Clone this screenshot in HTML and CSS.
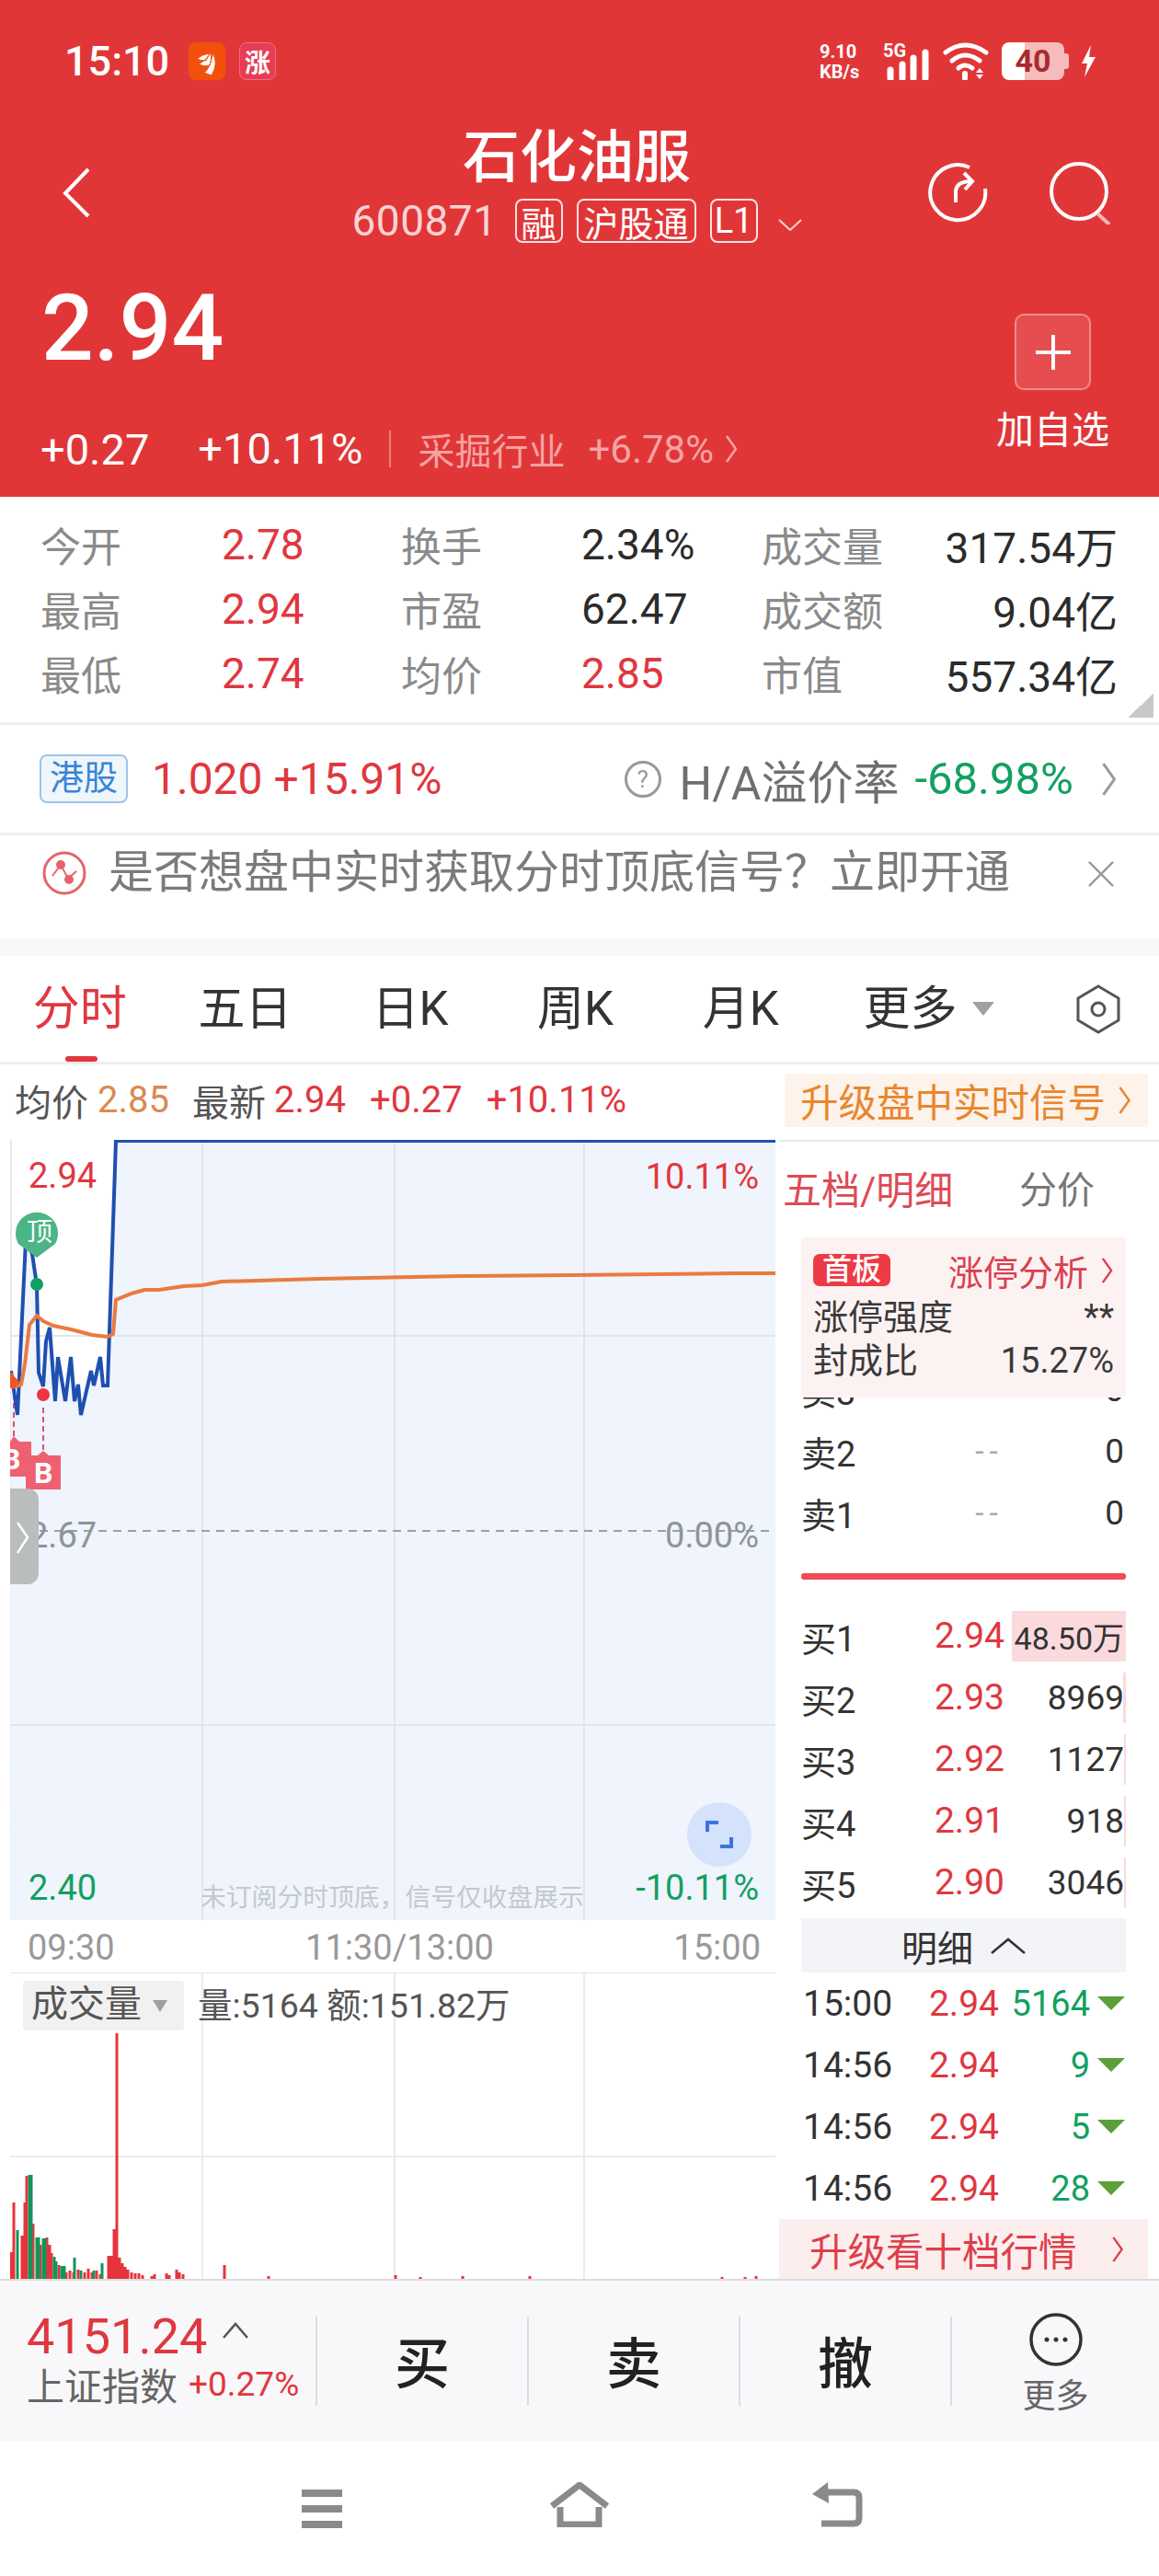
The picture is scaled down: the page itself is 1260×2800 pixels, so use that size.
FILE: index.html
```html
<!DOCTYPE html>
<html lang="zh-CN">
<head>
    <meta charset="UTF-8">
    <meta name="viewport" content="width=device-width, initial-scale=1.0">
    <title>石化油服 600871</title>
    <link rel="stylesheet" href="styles.css">
</head>
<body>
<div class="page">

    <!-- 红色头部 -->
    <header class="head">
        <div class="status">
            <div class="status-left">
                <span class="clock">15:10</span>
                <span class="app app-orange">
                    <svg viewBox="0 0 40 41"><path d="M9 18 Q15 13 23 12 L19 20 Q13 20 9 18Z M11 24 Q18 20 24 12 Q26 18 23 25 Q18 27 11 24Z M17 33 Q24 28 26 12 Q33 22 25 36Z" fill="#fff" stroke="#f2500c" stroke-width="1"/></svg>
                </span>
                <span class="app app-pink">涨</span>
            </div>
            <div class="status-right">
                <div class="net"><span>9.10</span><span>KB/s</span></div>
                <div class="signal">
                    <span class="five-g">5G</span>
                    <svg viewBox="0 0 51 41"><path d="M8 30V39M21 24V39M33 17V39M46 11V39" stroke="#fff" stroke-width="7" stroke-linecap="round" fill="none"/></svg>
                </div>
                <svg class="wifi" viewBox="0 0 51 41" fill="none" stroke="#fff" stroke-linecap="round"><path d="M3 11 Q24 -5 47 11" stroke-width="5"/><path d="M10 20 Q24 8 40 20" stroke-width="5"/><path d="M17 28 Q24 22 32 28" stroke-width="5"/><path d="M24 34V39" stroke-width="6"/><path d="M40 28 L44 33 H36Z M40 40 L44 35 H36Z" fill="#fff" stroke="none"/></svg>
                <div class="battery"><span>40</span></div>
                <svg class="bolt" viewBox="0 0 17 35"><path d="M11 0 L1 20 H7 L4 35 L16 13 H9Z" fill="#fff"/></svg>
            </div>
        </div>

        <div class="titlebar">
            <svg class="back" viewBox="0 0 30 55"><path d="M28 2 L3 28 L28 53"/></svg>
            <div class="title-mid">
                <h1>石化油服</h1>
                <div class="code-row">
                    <span class="code">600871</span>
                    <span class="tag tag-one">融</span>
                    <span class="tag">沪股通</span>
                    <span class="tag tag-one">L1</span>
                    <svg class="code-arrow" viewBox="0 0 26 13"><path d="M1 1 L13 12 L25 1"/></svg>
                </div>
            </div>
            <div class="title-icons">
                <svg class="icon-share" viewBox="0 0 66 68"><path d="M45 6 A30 30 0 1 0 62 29"/><path d="M30 44 V33 Q30 21 47 21"/><path d="M39 12 L48 21 L40 30"/></svg>
                <svg class="icon-search" viewBox="0 0 68 68"><circle cx="33" cy="32" r="30"/><path d="M53 56 L66 68" stroke="#f5b5b5"/></svg>
            </div>
        </div>

        <div class="quote">
            <div class="quote-left">
                <div class="price">2.94</div>
                <div class="change">
                    <span>+0.27</span>
                    <span class="pct">+10.11%</span>
                    <span class="sector">采掘行业</span>
                    <span class="sector-pct">+6.78%</span>
                    <svg class="chev chev-sector" viewBox="0 0 12 30"><path d="M1 1 L11 15 L1 29"/></svg>
                </div>
            </div>
            <div class="quote-right">
                <div class="add-btn">
                    <svg viewBox="0 0 40 40"><path d="M20 1V39M1 20H39" stroke="#fff" stroke-width="4" fill="none"/></svg>
                </div>
                <div class="add-label">加自选</div>
            </div>
        </div>
    </header>

    <!-- 行情数据 -->
    <section class="stats">
        <span class="lbl">今开</span><span class="up">2.78</span><span class="lbl">换手</span><span>2.34%</span><span class="lbl">成交量</span><span class="num-r">317.54万</span>
        <span class="lbl">最高</span><span class="up">2.94</span><span class="lbl">市盈</span><span>62.47</span><span class="lbl">成交额</span><span class="num-r">9.04亿</span>
        <span class="lbl">最低</span><span class="up">2.74</span><span class="lbl">均价</span><span class="up">2.85</span><span class="lbl">市值</span><span class="num-r">557.34亿</span>
        <i class="corner"></i>
    </section>

    <section class="hk-row">
        <span class="hk-tag">港股</span>
        <span class="hk-num">1.020 +15.91%</span>
        <div class="ha">
            <span class="help">?</span>
            <span class="ha-label">H/A溢价率</span>
            <span class="ha-num">-68.98%</span>
            <svg class="chev chev-ha" viewBox="0 0 12 30"><path d="M1 1 L11 15 L1 29"/></svg>
        </div>
    </section>

    <section class="banner">
        <svg class="banner-icon" viewBox="0 0 48 50" fill="none" stroke="#e5636b" stroke-width="3"><circle cx="24" cy="25" r="22"/><path d="M11 28 L20 16 L28 31 L37 23" stroke-width="2"/><circle cx="20" cy="16" r="3.5" fill="#e5636b"/><circle cx="29" cy="32" r="3.5" fill="#e5636b"/></svg>
        <span class="banner-text">是否想盘中实时获取分时顶底信号？立即开通</span>
        <svg class="banner-close" viewBox="0 0 30 30"><path d="M1 1 L29 29M29 1 L1 29"/></svg>
    </section>

    <div class="gap"></div>

    <!-- 分时 / K线 切换 -->
    <nav class="tabs">
        <span class="tab active">分时</span>
        <span class="tab">五日</span>
        <span class="tab">日K</span>
        <span class="tab">周K</span>
        <span class="tab">月K</span>
        <span class="tab tab-more">更多<i class="tri"></i></span>
        <svg class="hex" viewBox="0 0 48 54" fill="none" stroke="#555" stroke-width="3"><path d="M24 2 L46 15 V39 L24 52 L2 39 V15Z"/><circle cx="24" cy="27" r="7"/></svg>
    </nav>

    <main class="market">
        <div class="chart-col">
            <div class="info">
                <span class="info-lbl">均价</span><span class="info-avg">2.85</span>
                <span class="info-lbl info-new">最新</span><span class="up info-val">2.94</span>
                <span class="up info-chg">+0.27</span>
                <span class="up info-chg">+10.11%</span>
            </div>

            <div class="chart">
                <svg class="chart-svg" viewBox="11 1239 832 848">
                    <path d="M12 1490 L19 1538 L28 1348 L35 1363 L40 1397 L42 1492 L47 1507 L50 1458 L54 1443 L60 1523 L63 1475 L71 1523 L77 1475 L81 1523 L85 1505 L88 1538 L99 1490 L102 1506 L109 1475 L112 1506 L117 1506 L126 1240 H843 V2087 H11Z" fill="#eff4fd"/>
                    <path d="M220 1239V2087M429 1239V2087M635 1239V2087M11 1452H843M11 1875H843" stroke="#e0e5ee" stroke-width="2" fill="none"/>
                    <path d="M11 1664H843" stroke="#9aa0a6" stroke-width="2" stroke-dasharray="9 7" fill="none"/>
                    <path d="M47 1530V1577M15 1505V1561" stroke="#d9526f" stroke-width="2" stroke-dasharray="6 4" fill="none"/>
                    <path d="M12 1490 L19 1538 L28 1348 L35 1363 L40 1397 L42 1492 L47 1507 L50 1458 L54 1443 L60 1523 L63 1475 L71 1523 L77 1475 L81 1523 L85 1505 L88 1538 L99 1490 L102 1506 L109 1475 L112 1506 L117 1506 L126 1240 H843" stroke="#1f4fb0" stroke-width="4" fill="none"/>
                    <path d="M12 1493 L17 1507 L23 1505 L27 1483 L32 1440 L40 1430 L47 1436 L58 1441 L77 1445 L100 1451 L117 1453 L123 1450 L126 1413 L143 1406 L157 1402 L173 1402 L200 1398 L220 1397 L241 1393 L347 1390 L501 1387 L621 1386 L800 1384 L843 1384" stroke="#ea7a3e" stroke-width="4" fill="none"/>
                    <path d="M11 1491 L22 1503 L14 1510 L11 1508Z" fill="#f0562a"/>
                    <circle cx="40" cy="1396" r="7" fill="#12a060"/>
                    <circle cx="47" cy="1516" r="7" fill="#ee3344"/>
                    <path d="M20 1352 A23 23 0 1 1 60 1352 L40 1367Z" fill="#4cb585"/>
                    <path d="M11 1567 L15 1561 L21 1567 H34 V1605 H11Z" fill="#ef6070"/>
                    <path d="M28 1582 H41 L47 1577 L53 1582 H66 V1619 H28Z" fill="#ef6070"/>
                </svg>

                <span class="ding">顶</span>
                <span class="buy-b buy-b1">B</span>
                <span class="buy-b buy-b2">B</span>
                <span class="axis axis-tl up">2.94</span>
                <span class="axis axis-tr up">10.11%</span>
                <span class="axis axis-ml">2.67</span>
                <span class="axis axis-mr">0.00%</span>
                <span class="axis axis-bl down">2.40</span>
                <span class="axis axis-br down">-10.11%</span>
                <span class="chart-note">未订阅分时顶底，信号仅收盘展示</span>
                <div class="handle">
                    <svg viewBox="0 0 13 35"><path d="M1 1 L12 17 L1 34"/></svg>
                </div>
                <div class="expand">
                    <svg viewBox="0 0 30 30"><path d="M2 12 V2 H14M28 18 V28 H16"/></svg>
                </div>
            </div>

            <div class="times">
                <span>09:30</span>
                <span class="time-mid">11:30/13:00</span>
                <span>15:00</span>
            </div>

            <div class="volume">
                <svg class="vol-svg" viewBox="11 2144 832 333">
                    <path d="M220 2144V2477M429 2144V2477M635 2144V2477M11 2344H843" stroke="#e9ebef" stroke-width="2" fill="none"/>
                    <path d="M11 2144H843" stroke="#e4e6ea" stroke-width="2" fill="none"/>
                    <g fill="none" stroke-width="3">
                        <path stroke="#e6343c" d="M12 2448V2477M15 2394V2477M24 2430V2477M27 2394V2477M29 2365V2477M36 2417V2477M44 2440V2477M51 2432V2477M54 2440V2477M56 2449V2477M64 2462V2477M72 2470V2477M76 2468V2477M80 2470V2477M85 2467V2477M92 2470V2477M96 2466V2477M100 2470V2477M105 2468V2477M109 2472V2477M118 2452V2477M121 2452V2477M124 2423V2477M127 2210V2477M130 2454V2477M133 2460V2477M136 2464V2477M139 2467V2477M143 2470V2477M147 2471V2477M151 2471V2477M155 2473V2477M165 2474V2477M168 2472V2477M181 2471V2477M184 2473V2477M192 2467V2477M195 2470V2477M199 2472V2477M244 2462V2477M292 2474V2477M430 2473V2477M457 2475V2477M503 2474V2477M576 2474V2477M785 2475V2477M810 2475V2477M822 2474V2477"/>
                        <path stroke="#12955a" d="M19 2424V2477M32 2364V2477M34 2364V2477M40 2432V2477M42 2432V2477M47 2433V2477M49 2433V2477M59 2453V2477M61 2458V2477M67 2463V2477M70 2463V2477M81 2454V2477M88 2468V2477M102 2468V2477M111 2460V2477"/>
                    </g>
                </svg>
                <div class="vol-select">成交量<i class="tri tri-vol"></i></div>
                <span class="vol-text">量:5164 额:151.82万</span>
            </div>
        </div>

        <div class="book-col">
            <div class="signal-wrap">
                <div class="signal-btn">升级盘中实时信号<svg class="chev chev-signal" viewBox="0 0 12 30"><path d="M1 1 L11 15 L1 29"/></svg></div>
            </div>
            <div class="book-tabs">
                <span class="book-active">五档/明细</span>
                <span class="book-off">分价</span>
            </div>

            <div class="limit-card">
                <div class="limit-top">
                    <span class="limit-tag">首板</span>
                    <span class="limit-link">涨停分析<svg class="chev chev-limit" viewBox="0 0 12 30"><path d="M1 1 L11 15 L1 29"/></svg></span>
                </div>
                <div class="limit-line"><span>涨停强度</span><span>**</span></div>
                <div class="limit-line"><span>封成比</span><span>15.27%</span></div>
            </div>

            <div class="asks">
                <div class="row"><span>卖3</span><span class="dash">--</span><span class="qty">0</span></div>
                <div class="row"><span>卖2</span><span class="dash">--</span><span class="qty">0</span></div>
                <div class="row"><span>卖1</span><span class="dash">--</span><span class="qty">0</span></div>
            </div>
            <div class="mid-bar"></div>
            <div class="bids">
                <div class="row"><i class="bar" style="width:124px"></i><span>买1</span><span class="up px">2.94</span><span class="qty qty-big">48.50万</span></div>
                <div class="row"><i class="bar" style="width:3px"></i><span>买2</span><span class="up px">2.93</span><span class="qty">8969</span></div>
                <div class="row"><i class="bar" style="width:2px"></i><span>买3</span><span class="up px">2.92</span><span class="qty">1127</span></div>
                <div class="row"><i class="bar" style="width:2px"></i><span>买4</span><span class="up px">2.91</span><span class="qty">918</span></div>
                <div class="row"><i class="bar" style="width:2px"></i><span>买5</span><span class="up px">2.90</span><span class="qty">3046</span></div>
            </div>

            <div class="detail-head">明细<svg class="detail-arrow" viewBox="0 0 38 18"><path d="M1 17 L19 2 L37 17"/></svg></div>
            <div class="deal"><span>15:00</span><span class="up px">2.94</span><span class="down qty">5164</span><i class="deal-tri"></i></div>
            <div class="deal"><span>14:56</span><span class="up px">2.94</span><span class="down qty">9</span><i class="deal-tri"></i></div>
            <div class="deal"><span>14:56</span><span class="up px">2.94</span><span class="down qty">5</span><i class="deal-tri"></i></div>
            <div class="deal"><span>14:56</span><span class="up px">2.94</span><span class="down qty">28</span><i class="deal-tri"></i></div>
            <div class="upgrade">升级看十档行情<svg class="chev chev-upgrade" viewBox="0 0 12 30"><path d="M1 1 L11 15 L1 29"/></svg></div>
        </div>
    </main>

    <!-- 底部交易栏 -->
    <footer class="trade">
        <div class="index">
            <div class="index-top">
                <span class="index-num">4151.24</span>
                <svg class="index-arrow" viewBox="0 0 30 18"><path d="M2 17 L15 2 L28 17"/></svg>
            </div>
            <div class="index-bottom">
                <span class="index-name">上证指数</span>
                <span class="index-pct">+0.27%</span>
            </div>
        </div>
        <div class="trade-btn">买</div>
        <div class="trade-btn">卖</div>
        <div class="trade-btn">撤</div>
        <div class="trade-more">
            <svg viewBox="0 0 58 58" fill="none"><circle cx="29" cy="29" r="27" stroke="#333" stroke-width="3.5"/><circle cx="19" cy="29" r="2.5" fill="#333"/><circle cx="29" cy="29" r="2.5" fill="#333"/><circle cx="39" cy="29" r="2.5" fill="#333"/></svg>
            <span>更多</span>
        </div>
    </footer>

    <div class="sys-nav">
        <svg class="sys-menu" viewBox="0 0 52 42"><path d="M4 4H48M4 21H48M4 38H48"/></svg>
        <svg class="sys-home" viewBox="0 0 66 49"><path d="M3 26 L33 3 L63 26"/><path d="M12 27 V46 H54 V27"/></svg>
        <svg class="sys-back" viewBox="0 0 56 49"><path d="M14 11 H46 Q52 11 52 17 V39 Q52 45 46 45 H11"/><path d="M18 0 L1 13 L19 23Z" fill="#8a8a8a" stroke="none"/></svg>
    </div>
</div>
</body>
</html>
```

FILE: styles.css
```css
/* 基础 */
* {
    box-sizing: border-box;
}

body {
    margin: 0;
    background: #fff;
    font-family: Roboto, "Noto Sans CJK SC", sans-serif;
    color: #2b2b2b;
}

.page {
    width: 1260px;
    height: 2800px;
    overflow: hidden;
}

svg {
    display: block;
}

.up { color: #e0373f; }
.down { color: #12a060; }

.chev {
    fill: none;
    stroke: currentColor;
    stroke-width: 2.5;
}

/* 头部 */
.head {
    height: 540px;
    background: #e13638;
    color: #fff;
}

.status {
    display: flex;
    justify-content: space-between;
    height: 87px;
    padding: 46px 68px 0 70px;
}

.status-left,
.status-right {
    display: flex;
    align-items: center;
    height: 41px;
}

.clock {
    width: 135px;
    font-size: 45px;
    line-height: 41px;
    font-weight: 500;
}

.app {
    display: flex;
    align-items: center;
    justify-content: center;
    width: 40px;
    height: 41px;
    border-radius: 8px;
    font-size: 28px;
    font-weight: 700;
}

.app-orange { background: #f2500c; }
.app-pink {
    margin-left: 15px;
    border: 1px solid #f26d80;
    background: #e83c55;
}

.net {
    display: flex;
    flex-direction: column;
    width: 50px;
    font-size: 20px;
    line-height: 22px;
    font-weight: 700;
    margin-right: 19px;
}

.signal {
    position: relative;
    width: 51px;
    height: 41px;
    margin-right: 14px;
}

.five-g {
    position: absolute;
    left: 0;
    top: -1px;
    font-size: 20px;
    line-height: 20px;
    font-weight: 700;
}

.wifi {
    width: 51px;
    height: 41px;
    margin-right: 13px;
}

.battery {
    position: relative;
    width: 68px;
    height: 41px;
    margin-right: 18px;
    border-radius: 8px;
    background: linear-gradient(90deg, #fff 25px, #f6bcbc 25px);
    color: #a92a30;
    font-size: 34px;
    line-height: 41px;
    font-weight: 700;
    text-align: center;
}

.battery::after {
    content: "";
    position: absolute;
    right: -5px;
    top: 12px;
    width: 5px;
    height: 17px;
    border-radius: 0 3px 3px 0;
    background: #f6bcbc;
}

.bolt {
    width: 17px;
    height: 35px;
}

.titlebar {
    display: grid;
    grid-template-columns: 1fr auto 1fr;
    margin-top: 50px;
    padding: 0 61px 0 55px;
}

.back {
    width: 30px;
    height: 55px;
    margin: 45px 0 0 13px;
    fill: none;
    stroke: #fff;
    stroke-width: 4;
}

.title-mid {
    display: flex;
    flex-direction: column;
    align-items: center;
}

.title-mid h1 {
    margin: 0;
    font-size: 62px;
    line-height: 70px;
    font-weight: 500;
}

.code-row {
    display: flex;
    align-items: center;
    height: 48px;
    margin-top: 9px;
    color: #f8d3d3;
}

.code {
    margin-right: 19px;
    font-size: 46px;
    letter-spacing: 0.5px;
}

.tag {
    display: flex;
    align-items: center;
    justify-content: center;
    width: 130px;
    height: 48px;
    margin-right: 15px;
    border: 2px solid #fbe0e0;
    border-radius: 8px;
    color: #fff;
    font-size: 38px;
    white-space: nowrap;
}

.tag-one {
    width: 52px;
}

.code-arrow {
    width: 26px;
    height: 13px;
    margin: 8px 0 0 7px;
    fill: none;
    stroke: #f8d3d3;
    stroke-width: 2;
}

.title-icons {
    display: flex;
    justify-content: flex-end;
    gap: 65px;
    margin: 39px -9px 0 0;
}

.icon-share,
.icon-search {
    height: 68px;
    fill: none;
    stroke: #fff;
    stroke-width: 4;
}

.icon-share { width: 66px; }
.icon-search { width: 68px; }

.quote {
    display: flex;
    justify-content: space-between;
    padding: 0 54px 0 46px;
}

.quote-left {
    margin-top: 43px;
}

.price {
    font-size: 100px;
    line-height: 100px;
    font-weight: 500;
    margin-left: -1px;
}

.change {
    display: flex;
    align-items: center;
    height: 44px;
    margin-top: 59px;
    margin-left: -2px;
    font-size: 47px;
}

.pct {
    margin-left: 53px;
    padding-right: 29px;
    border-right: 2px solid #ec7f80;
    line-height: 40px;
}

.sector {
    margin-left: 29px;
    color: #f5a3a3;
    font-size: 40px;
}

.sector-pct {
    margin-left: 25px;
    color: #f5a3a3;
    font-size: 42px;
}

.chev-sector {
    width: 12px;
    height: 30px;
    margin-left: 13px;
    color: #f5a3a3;
}

.quote-right {
    display: flex;
    flex-direction: column;
    align-items: center;
    width: 123px;
    margin-top: 77px;
}

.add-btn {
    display: flex;
    align-items: center;
    justify-content: center;
    width: 83px;
    height: 83px;
    border: 2px solid #f18b8b;
    border-radius: 10px;
    background: #e64d4f;
}

.add-btn svg {
    width: 40px;
    height: 40px;
}

.add-label {
    margin-top: 20px;
    font-size: 41px;
    line-height: 48px;
    white-space: nowrap;
}

/* 数据表 */
.stats {
    position: relative;
    display: grid;
    grid-template-columns: 197px 195px 196px 196px 140px 247px;
    grid-auto-rows: 70px;
    align-items: center;
    height: 248px;
    padding: 17px 0 0 44px;
    border-bottom: 3px solid #eee;
    font-size: 46px;
}

.lbl { color: #8a8a8a; font-size: 44px; }
.num-r { text-align: right; white-space: nowrap; }

.corner {
    position: absolute;
    right: 6px;
    bottom: 5px;
    width: 28px;
    height: 26px;
    background: linear-gradient(to bottom right, transparent 50%, #c8c8c8 50%);
}

.hk-row {
    display: flex;
    align-items: center;
    height: 120px;
    padding: 0 45px 0 43px;
    border-bottom: 3px solid #eee;
}

.hk-tag {
    width: 96px;
    height: 53px;
    border: 2px solid #9cc5ea;
    border-radius: 8px;
    background: #eff6fc;
    color: #3a85d6;
    font-size: 37px;
    line-height: 49px;
    text-align: center;
}

.hk-num {
    margin-left: 26px;
    color: #e0373f;
    font-size: 48px;
}

.ha {
    display: flex;
    align-items: center;
    margin-left: auto;
}

.help {
    width: 40px;
    height: 40px;
    border: 3px solid #999;
    border-radius: 50%;
    color: #999;
    font-size: 26px;
    line-height: 34px;
    text-align: center;
}

.ha-label {
    margin-left: 20px;
    color: #6f6f6f;
    font-size: 50px;
}

.ha-num {
    margin-left: 17px;
    color: #12a060;
    font-size: 49px;
}

.chev-ha {
    width: 19px;
    height: 36px;
    margin-left: 29px;
    color: #999;
}

.banner {
    display: flex;
    align-items: flex-start;
    height: 113px;
    padding: 16px 48px 0 46px;
}

.banner-icon {
    width: 48px;
    height: 50px;
}

.banner-text {
    margin-left: 24px;
    color: #7b7b7b;
    font-size: 49px;
    line-height: 50px;
    white-space: nowrap;
}

.banner-close {
    width: 30px;
    height: 28px;
    margin: 12px 0 0 auto;
    fill: none;
    stroke: #9a9a9a;
    stroke-width: 2.5;
}

.gap {
    height: 18px;
    background: #f7f7f7;
}

/* 切换栏 */
.tabs {
    position: relative;
    display: grid;
    grid-template-columns: repeat(6, 179.6px);
    align-items: center;
    height: 118px;
    margin-left: -3px;
    border-bottom: 3px solid #eee;
    font-size: 51px;
    color: #333;
}

.tab {
    position: relative;
    display: flex;
    justify-content: center;
    line-height: 115px;
}

.tab.active {
    color: #e0373f;
}

.tab.active::after {
    content: "";
    position: absolute;
    left: 74px;
    bottom: 0;
    width: 35px;
    height: 6px;
    border-radius: 3px;
    background: #e0373f;
}

.tri {
    align-self: center;
    display: block;
    width: 0;
    height: 0;
    margin-left: 17px;
    border-left: 12px solid transparent;
    border-right: 12px solid transparent;
    border-top: 15px solid #a0a0a0;
}

.tab-more {
    width: 144px;
    margin-left: 43px;
    white-space: nowrap;
}

.hex {
    position: absolute;
    right: 42px;
    top: 31px;
    width: 48px;
    height: 54px;
}

/* 行情主区 */
.market {
    display: flex;
    height: 1320px;
    overflow: hidden;
}

.chart-col {
    width: 847px;
    flex: none;
}

.info {
    display: flex;
    align-items: center;
    height: 82px;
    padding: 0 0 5px 16px;
    font-size: 40px;
    white-space: nowrap;
}

.info-lbl { color: #555; }
.info-avg { margin-left: 10px; color: #d98a50; }
.info-new { margin-left: 25px; }
.info-val { margin-left: 9px; }
.info-chg { margin-left: 26px; }

.chart {
    position: relative;
    width: 832px;
    height: 848px;
    margin-left: 11px;
    border-left: 2px solid #e6e8ec;
    border-bottom: 2px solid #e0e3e8;
}

.chart-svg {
    position: absolute;
    left: -2px;
    top: 0;
    width: 832px;
    height: 848px;
}

.axis {
    position: absolute;
    font-size: 38px;
    line-height: 44px;
}

.axis-tl { left: 18px; top: 17px; }
.axis-tr { right: 18px; top: 18px; }
.axis-ml { left: 18px; top: 408px; color: #8f9499; }
.axis-mr { right: 18px; top: 408px; color: #8f9499; }
.axis-bl { left: 18px; top: 791px; }
.axis-br { right: 18px; top: 791px; }

.ding {
    position: absolute;
    left: 15px;
    top: 86px;
    width: 30px;
    color: #fff;
    font-size: 28px;
    line-height: 30px;
    text-align: center;
}

.buy-b {
    position: absolute;
    color: #fff;
    font-size: 32px;
    line-height: 36px;
    font-weight: 700;
}

.buy-b1 { left: -11px; top: 329px; }
.buy-b2 { left: 24px; top: 344px; }

.chart-note {
    position: absolute;
    left: 205px;
    top: 807px;
    color: #c4c8ce;
    font-size: 27.8px;
    line-height: 34px;
    white-space: nowrap;
}

.handle {
    position: absolute;
    left: -2px;
    top: 379px;
    width: 31px;
    height: 104px;
    padding: 36px 0 0 7px;
    border-radius: 0 12px 12px 0;
    background: #babdbe;
}

.handle svg {
    width: 13px;
    height: 35px;
    fill: none;
    stroke: #fff;
    stroke-width: 2.5;
}

.expand {
    position: absolute;
    left: 734px;
    top: 720px;
    width: 70px;
    height: 70px;
    padding: 20px;
    border-radius: 50%;
    background: #d4e2fb;
}

.expand svg {
    width: 30px;
    height: 30px;
    fill: none;
    stroke: #3b74e0;
    stroke-width: 4;
}

.times {
    display: flex;
    justify-content: space-between;
    height: 57px;
    padding: 0 20px 0 30px;
    color: #999;
    font-size: 38px;
    line-height: 60px;
}

.time-mid {
    margin-left: 12px;
}

.volume {
    position: relative;
    width: 832px;
    height: 333px;
    margin-left: 11px;
}

.vol-svg {
    width: 832px;
    height: 333px;
}

.vol-select {
    position: absolute;
    left: 14px;
    top: 9px;
    display: flex;
    width: 175px;
    height: 54px;
    padding-left: 9px;
    border-radius: 4px;
    background: #f1f1f1;
    color: #555;
    font-size: 40px;
    line-height: 52px;
}

.tri-vol {
    margin-left: 12px;
    border-left-width: 8px;
    border-right-width: 8px;
    border-top-width: 13px;
}

.vol-text {
    position: absolute;
    left: 204px;
    top: 12px;
    color: #555;
    font-size: 37.5px;
    line-height: 48px;
    white-space: nowrap;
}

/* 右侧盘口 */
.book-col {
    position: relative;
    width: 413px;
    flex: none;
}

.signal-wrap {
    height: 84px;
    padding: 10px 12px 0 6px;
    border-bottom: 2px solid #e6e8ec;
}

.signal-btn {
    display: flex;
    align-items: center;
    height: 58px;
    padding-left: 17px;
    background: #fdf3ea;
    color: #e8862e;
    font-size: 41.5px;
    white-space: nowrap;
}

.chev-signal {
    width: 15px;
    height: 30px;
    margin-left: 13px;
}

.book-tabs {
    display: flex;
    align-items: center;
    height: 104px;
    padding: 0 0 6px 4px;
    font-size: 42px;
}

.book-active { color: #de4a55; width: 257px; white-space: nowrap; }
.book-off { color: #777; font-size: 41px; }

.limit-card {
    position: absolute;
    left: 24px;
    top: 188px;
    z-index: 2;
    width: 353px;
    height: 174px;
    padding: 18px 13px 0 13px;
    border-radius: 4px;
    background: #fdf2f2;
}

.limit-top {
    display: flex;
    justify-content: space-between;
    align-items: center;
    height: 35px;
    margin-bottom: 11px;
}

.limit-tag {
    width: 84px;
    height: 35px;
    border-radius: 7px;
    background: #ee3a45;
    color: #fff;
    font-size: 32px;
    line-height: 34px;
    font-weight: 500;
    text-align: center;
}

.limit-link {
    display: flex;
    align-items: center;
    color: #d9404e;
    font-size: 38px;
}

.chev-limit {
    width: 15px;
    height: 28px;
    margin-left: 13px;
}

.limit-line {
    display: flex;
    justify-content: space-between;
    height: 47px;
    padding-left: 0;
    font-size: 38px;
    line-height: 47px;
    color: #3a3a3a;
}

.asks {
    padding-top: 131.5px;
}

.row {
    position: relative;
    display: grid;
    grid-template-columns: 102px 119px 1fr;
    align-items: center;
    height: 67px;
    padding: 0 38px 0 24px;
    font-size: 38px;
    color: #333;
}

.row > span {
    position: relative;
}

.dash {
    color: #aaa;
    text-align: right;
    padding-right: 1px;
    letter-spacing: 6px;
    font-size: 34px;
}

.px {
    font-size: 39px;
    text-align: right;
}

.qty {
    text-align: right;
    font-size: 37px;
    white-space: nowrap;
}

.qty-big {
    font-size: 34px;
}

.bar {
    position: absolute;
    right: 36px;
    top: 6px;
    height: 55px;
    background: #fadadd;
}

.mid-bar {
    height: 7px;
    margin: 32.5px 36px 27.5px 24px;
    border-radius: 3px;
    background: #ef4c55;
}

.detail-head {
    display: flex;
    justify-content: center;
    align-items: center;
    height: 59px;
    margin: 5.5px 36px 0 24px;
    background: #f3f4f7;
    color: #333;
    font-size: 39px;
}

.detail-arrow {
    width: 38px;
    height: 18px;
    margin-left: 19px;
    fill: none;
    stroke: #333;
    stroke-width: 2.5;
}

.deal {
    display: grid;
    grid-template-columns: 100px 113px 99px 29px;
    align-items: center;
    column-gap: 0;
    height: 67px;
    padding-left: 26px;
    font-size: 39px;
    color: #333;
}

.deal .qty {
    font-size: 38px;
}

.deal-tri {
    width: 0;
    height: 0;
    margin-left: 8px;
    border-left: 15px solid transparent;
    border-right: 15px solid transparent;
    border-top: 15px solid #5c9e3a;
}

.upgrade {
    display: flex;
    align-items: center;
    height: 66px;
    width: 401px;
    padding-left: 33px;
    background: #fdeeee;
    color: #dd3f4a;
    font-size: 41.5px;
    white-space: nowrap;
}

.chev-upgrade {
    width: 16px;
    height: 28px;
    margin-left: 36px;
}

/* 底部交易栏 */
.trade {
    display: flex;
    align-items: center;
    height: 176px;
    border-top: 2px solid #dcdcdc;
    background: #f8f8fa;
}

.index {
    width: 343px;
    padding: 0 0 6px 29px;
}

.index-top {
    display: flex;
    align-items: flex-start;
    height: 56px;
}

.index-num {
    color: #e0373f;
    font-size: 54px;
    line-height: 56px;
}

.index-arrow {
    width: 30px;
    height: 18px;
    margin: 12px 0 0 16px;
    fill: none;
    stroke: #555;
    stroke-width: 2.5;
}

.index-bottom {
    display: flex;
    align-items: center;
    height: 46px;
    white-space: nowrap;
}

.index-name {
    color: #666;
    font-size: 41px;
}

.index-pct {
    margin-left: 12px;
    color: #e0373f;
    font-size: 37px;
}

.trade-btn {
    display: flex;
    align-items: center;
    justify-content: center;
    width: 230px;
    height: 97px;
    border-left: 2px solid #dcdce0;
    font-size: 60px;
    font-weight: 500;
    color: #222;
    padding-bottom: 4px;
}

.trade-more {
    display: flex;
    flex-direction: column;
    align-items: center;
    width: 227px;
    height: 97px;
    border-left: 2px solid #dcdce0;
    color: #666;
    font-size: 36px;
    line-height: 44px;
}

.trade-more svg {
    flex: none;
    width: 58px;
    height: 58px;
    margin-top: -4px;
}

.trade-more span {
    margin-top: 11px;
}

/* 系统导航 */
.sys-nav {
    display: grid;
    grid-template-columns: repeat(3, 280px);
    justify-content: center;
    justify-items: center;
    padding-top: 45px;
}

.sys-menu,
.sys-home,
.sys-back {
    fill: none;
    stroke: #8a8a8a;
    stroke-width: 7;
}

.sys-menu { width: 52px; height: 42px; margin-top: 8px; stroke-width: 8; }
.sys-home { width: 66px; height: 49px; }
.sys-back { width: 56px; height: 49px; }
```
